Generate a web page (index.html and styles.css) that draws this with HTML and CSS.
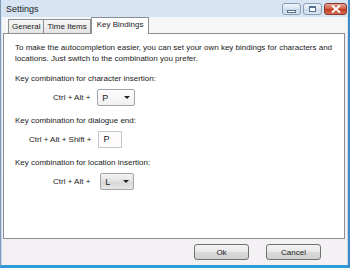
FILE: index.html
```html
<!DOCTYPE html>
<html lang="en">
<head>
  <meta charset="UTF-8">
  <title>Settings</title>
  <link rel="stylesheet" href="styles.css">
</head>
<body>
  <div class="window">
    <!-- Title bar -->
    <div class="titlebar">
      <span class="title">Settings</span>
      <div class="controls">
        <div class="ctl ctl-min"><span class="min-bar"></span></div>
        <div class="ctl ctl-max"><span class="max-box"></span></div>
        <div class="ctl ctl-close">
          <svg width="10" height="8" viewBox="0 0 10 8"><path d="M1 0.5 L9 7.5 M9 0.5 L1 7.5" stroke="#fff" stroke-width="2"/></svg>
        </div>
      </div>
    </div>

    <div class="client">
      <!-- Tabs -->
      <div class="tabs">
        <div class="tab">General</div>
        <div class="tab">Time Items</div>
        <div class="tab active">Key Bindings</div>
      </div>

      <!-- Key bindings page -->
      <div class="panel">
        <p class="intro">To make the autocompletion easier, you can set your own key bindings for characters and locations. Just switch to the combination you prefer.</p>

        <div class="label">Key combination for character insertion:</div>
        <div class="row row-char">
          <span class="keys">Ctrl + Alt +</span>
          <div class="combo"><span>P</span><span class="arrow"></span></div>
        </div>

        <div class="label">Key combination for dialogue end:</div>
        <div class="row row-dialog">
          <span class="keys">Ctrl + Alt + Shift +</span>
          <div class="textbox">P</div>
        </div>

        <div class="label">Key combination for location insertion:</div>
        <div class="row row-loc">
          <span class="keys">Ctrl + Alt +</span>
          <div class="combo combo-grey"><span>L</span><span class="arrow"></span></div>
        </div>
      </div>

      <!-- Dialog buttons -->
      <div class="footer">
        <button class="btn">Ok</button>
        <button class="btn">Cancel</button>
      </div>
    </div>
  </div>
</body>
</html>
```

FILE: styles.css
```css
body {
  margin: 0;
  width: 350px;
  height: 268px;
  overflow: hidden;
  font-family: 'Liberation Sans', Arial, sans-serif;
  font-size: 8px;
  color: #1a1a1a;
}

.window {
  box-sizing: border-box;
  width: 350px;
  height: 268px;
  display: flex;
  flex-direction: column;
  background: linear-gradient(#d6e4f3, #c3d6eb);
  border-left: 1px solid #7d9ab8;
  border-right: 2px solid #3d8ac4;
  border-bottom: 3px solid #2f9ad6;
}

/* Title bar */
.titlebar {
  height: 17px;
  display: flex;
  align-items: center;
  padding-left: 5px;
}

.title {
  font-size: 9px;
  color: #222;
}

.controls {
  margin-left: auto;
  margin-right: 1px;
  display: flex;
  gap: 2px;
  align-self: flex-start;
  margin-top: 3px;
}

.ctl {
  height: 12px;
  box-sizing: border-box;
  border: 1px solid #8a9db4;
  border-radius: 3px;
  display: flex;
  align-items: center;
  justify-content: center;
}

.ctl-min,
.ctl-max {
  width: 19px;
  background: linear-gradient(#eef4fa, #d8e4f0 50%, #c8d8ea 51%, #d9e6f2);
}

.min-bar {
  width: 7px;
  height: 1px;
  margin-top: 4px;
  background: #fff;
  border: 1px solid #56708f;
}

.max-box {
  width: 5px;
  height: 3px;
  border: 1px solid #56708f;
  border-top-width: 2px;
  background: #fff;
}

.ctl-close {
  width: 23px;
  border-color: #8a3a30;
  background: linear-gradient(#e8a696, #d0583f 50%, #bf3b22 51%, #d66a4c);
}

/* Window body */
.client {
  flex: 1;
  display: flex;
  flex-direction: column;
  margin: 0 1px;
  background: #f4f1f4;
}

.tabs {
  height: 16px;
  display: flex;
  align-items: flex-end;
  padding-left: 6px;
  background: #f7f6f7;
}

.tab {
  height: 13px;
  line-height: 13px;
  padding: 0 3px;
  border: 1px solid #8c8e94;
  border-bottom: none;
  margin-right: -1px;
  background: linear-gradient(#f6f6f6, #e4e4e4);
  font-size: 8px;
}

.tab.active {
  position: relative;
  height: 16px;
  line-height: 14px;
  padding: 0 5px;
  margin-left: 1px;
  background: #fff;
  margin-bottom: -1px;
  z-index: 1;
}

.panel {
  height: 206px;
  box-sizing: border-box;
  margin: 0 2px 0 1px;
  background: #fff;
  border: 1px solid #8c8e94;
  padding: 8px 10px 0 11px;
}

.intro {
  margin: 0;
  line-height: 11px;
}

.label {
  margin-top: 9px;
  line-height: 11px;
}

.row {
  display: flex;
  align-items: center;
  height: 17px;
  margin-top: 5px;
}

.row-char { padding-left: 38px; }
.row-char .combo { margin-left: 7px; }
.row-dialog { padding-left: 14px; }
.row-dialog .textbox { margin-left: 7px; }
.row-loc { padding-left: 38px; }
.row-loc .combo { margin-left: 10px; }

.combo {
  box-sizing: border-box;
  width: 38px;
  height: 17px;
  border: 1px solid #a3a6ad;
  border-radius: 2px;
  background: linear-gradient(#fdfdfd, #f0f0f0);
  display: flex;
  align-items: center;
  padding-left: 4px;
  font-size: 9px;
}

.combo-grey {
  width: 34px;
  background: linear-gradient(#f4f4f4, #e1e1e1 50%, #d6d6d6 51%, #e6e6e6);
}

.arrow {
  margin-left: auto;
  margin-right: 4px;
  width: 0;
  height: 0;
  border-left: 3px solid transparent;
  border-right: 3px solid transparent;
  border-top: 3px solid #222;
}

.textbox {
  box-sizing: border-box;
  width: 24px;
  height: 17px;
  border: 1px solid #c4c7cd;
  background: #fdfbfc;
  padding-left: 4px;
  line-height: 15px;
  font-size: 9px;
}

.footer {
  flex: 1;
  display: flex;
  justify-content: flex-end;
  align-items: center;
  gap: 17px;
  padding-right: 26px;
}

.btn {
  width: 55px;
  height: 16px;
  padding: 0;
  font-family: 'Liberation Sans', Arial, sans-serif;
  font-size: 8px;
  color: #1a1a1a;
  border: 1px solid #707070;
  border-radius: 3px;
  background: linear-gradient(#f4f4f4, #e8e8e8 50%, #dadada 51%, #cfcfcf);
}
```
